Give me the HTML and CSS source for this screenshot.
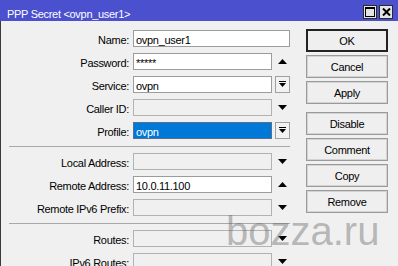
FILE: index.html
```html
<!DOCTYPE html>
<html>
<head>
<meta charset="utf-8">
<link rel="stylesheet" href="styles.css">
</head>
<body>
<div class="window">
  <div class="titlebar">
    <span class="title">PPP Secret &lt;ovpn_user1&gt;</span>
    <div class="tb-buttons">
      <span class="tb-btn"><svg width="10" height="10" viewBox="0 0 10 10"><rect x="0.5" y="0.5" width="9" height="9" fill="none" stroke="#000"/><rect x="0" y="0" width="10" height="2" fill="#000"/></svg></span>
      <span class="tb-btn"><svg width="9" height="8" viewBox="0 0 9 8"><path d="M1 0.5 L8 7.5 M8 0.5 L1 7.5" stroke="#000" stroke-width="2" fill="none"/></svg></span>
    </div>
  </div>
  <div class="body">
    <div class="form">
      <div class="label">Name:</div>
      <div class="field wide">ovpn_user1</div>

      <div class="label">Password:</div>
      <div class="field">*****</div>
      <div class="trail"><svg width="9" height="5" viewBox="0 0 9 5"><polygon points="4.5,0 9,5 0,5"/></svg></div>

      <div class="label">Service:</div>
      <div class="field">ovpn</div>
      <div class="trail drop"><svg width="7" height="7" viewBox="0 0 7 7"><rect x="0" y="0" width="7" height="1"/><polygon points="0,2 7,2 3.5,6"/></svg></div>

      <div class="label">Caller ID:</div>
      <div class="field off"></div>
      <div class="trail"><svg width="9" height="5" viewBox="0 0 9 5"><polygon points="0,0 9,0 4.5,5"/></svg></div>

      <div class="label">Profile:</div>
      <div class="field sel">ovpn</div>
      <div class="trail drop"><svg width="7" height="7" viewBox="0 0 7 7"><rect x="0" y="0" width="7" height="1"/><polygon points="0,2 7,2 3.5,6"/></svg></div>

      <div class="sep"></div>

      <div class="label">Local Address:</div>
      <div class="field off"></div>
      <div class="trail"><svg width="9" height="5" viewBox="0 0 9 5"><polygon points="0,0 9,0 4.5,5"/></svg></div>

      <div class="label">Remote Address:</div>
      <div class="field">10.0.11.100</div>
      <div class="trail"><svg width="9" height="5" viewBox="0 0 9 5"><polygon points="4.5,0 9,5 0,5"/></svg></div>

      <div class="label">Remote IPv6 Prefix:</div>
      <div class="field off"></div>
      <div class="trail"><svg width="9" height="5" viewBox="0 0 9 5"><polygon points="0,0 9,0 4.5,5"/></svg></div>

      <div class="sep"></div>

      <div class="label">Routes:</div>
      <div class="field off"></div>
      <div class="trail"><svg width="9" height="5" viewBox="0 0 9 5"><polygon points="0,0 9,0 4.5,5"/></svg></div>

      <div class="label">IPv6 Routes:</div>
      <div class="field off"></div>
      <div class="trail"><svg width="9" height="5" viewBox="0 0 9 5"><polygon points="0,0 9,0 4.5,5"/></svg></div>
    </div>
    <div class="buttons">
      <div class="btn default">OK</div>
      <div class="btn">Cancel</div>
      <div class="btn">Apply</div>
      <div class="btn spaced">Disable</div>
      <div class="btn">Comment</div>
      <div class="btn">Copy</div>
      <div class="btn">Remove</div>
    </div>
  </div>
  <div class="watermark">bozza.ru</div>
</div>
</body>
</html>
```
FILE: styles.css
```css
* { box-sizing: border-box; }
html, body { margin: 0; padding: 0; }
body {
  width: 398px;
  height: 266px;
  overflow: hidden;
  background: #f0f0f0;
  font-family: "Liberation Sans", Arial, sans-serif;
  font-size: 11px;
  letter-spacing: -0.3px;
  color: #000;
}
.window {
  position: relative;
  width: 398px;
  height: 266px;
}
.titlebar {
  height: 21px;
  background: #4b50cf;
  display: flex;
  align-items: flex-start;
  padding: 0 5px 0 7px;
}
.title {
  flex: 1;
  color: #fff;
  font-size: 11px;
  line-height: 14px;
  margin-top: 7px;
}
.tb-buttons {
  display: flex;
  gap: 2px;
  margin-top: 5px;
}
.tb-btn {
  width: 14px;
  height: 14px;
  background: #e4e4e4;
  border: 1px solid #2a2a2a;
  display: flex;
  align-items: center;
  justify-content: center;
}
.tb-btn svg { display: block; }
.body {
  display: flex;
  align-items: flex-start;
  height: 245px;
  border-left: 1px solid #3a3a3a;
  padding-top: 9px;
}
.form {
  display: grid;
  grid-template-columns: 129px 139px 15px;
  column-gap: 3px;
  row-gap: 6px;
  align-items: start;
}
.label {
  height: 17px;
  text-align: right;
  white-space: nowrap;
  padding: 3px 1px 0 0;
  line-height: 14px;
}
.field {
  height: 17px;
  border: 1px solid #9c9c9c;
  background: #fff;
  padding: 2px 2px 0 2px;
  line-height: 14px;
  white-space: nowrap;
}
.field.wide { grid-column: 2 / 4; }
.field.off { background: #f0f0f0; border-color: #b2b2b2; }
.field.sel { background: #0078d7; color: #fff; border-color: #5a6f8a; }
.trail {
  height: 17px;
  display: flex;
  align-items: center;
  justify-content: center;
}
.trail svg { display: block; fill: #000; }
.drop {
  border: 1px solid #a0a0a0;
  background: #f2f2f2;
}
.sep {
  grid-column: 1 / -1;
  height: 1px;
  margin: 1px 0 0 8px;
  background: #a8a8a8;
}
.buttons {
  display: flex;
  flex-direction: column;
  gap: 3px;
  margin-left: 16px;
  margin-top: -1px;
}
.btn {
  width: 82px;
  height: 23px;
  border: 1px solid #9a9a9a;
  box-shadow: inset 0 0 0 1px #d4d4d4;
  background: #efefef;
  display: flex;
  align-items: center;
  justify-content: center;
}
.btn.default {
  border: 2px solid #222;
  box-shadow: none;
}
.btn.spaced { margin-top: 5px; }
.watermark {
  position: absolute;
  left: 226px;
  top: 208px;
  font-family: "Liberation Sans", Arial, sans-serif;
  font-size: 40px;
  letter-spacing: 0;
  line-height: 46px;
  color: rgba(100, 100, 100, 0.42);
  pointer-events: none;
}
```
